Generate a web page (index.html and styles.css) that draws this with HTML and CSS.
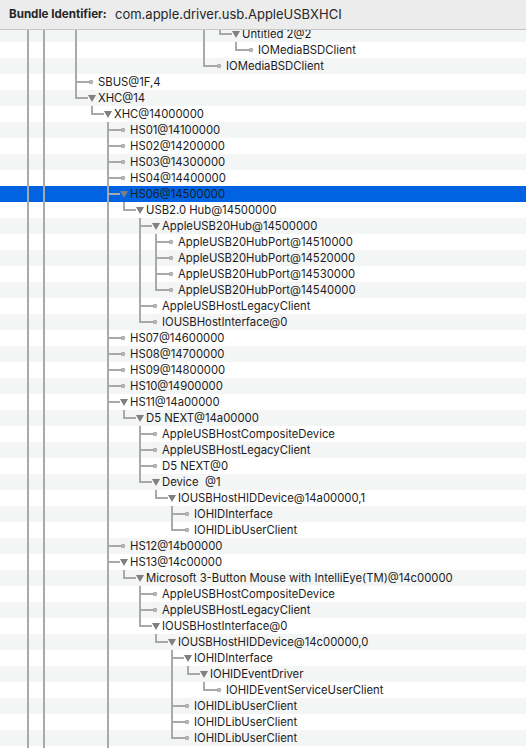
FILE: index.html
```html
<!DOCTYPE html>
<html>
<head>
<meta charset="utf-8">
<link rel="stylesheet" href="styles.css">
</head>
<body>
<div class="hdr"><b>Bundle Identifier:</b><span>com.apple.driver.usb.AppleUSBXHCI</span></div>
<div class="tree">
<div class="rows">
<div class="row"><span class="g p"></span><span class="g p"></span><span class="g"></span><span class="g p"></span><span class="g"></span><span class="g"></span><span class="g"></span><span class="g"></span><span class="g"></span><span class="g"></span><span class="g"></span><span class="g p"></span><span class="g e"></span><span class="m o"><i></i></span><span class="tx">Untitled 2@2</span></div>
<div class="row"><span class="g p"></span><span class="g p"></span><span class="g"></span><span class="g p"></span><span class="g"></span><span class="g"></span><span class="g"></span><span class="g"></span><span class="g"></span><span class="g"></span><span class="g"></span><span class="g p"></span><span class="g"></span><span class="g e"></span><span class="m l"></span><span class="tx">IOMediaBSDClient</span></div>
<div class="row"><span class="g p"></span><span class="g p"></span><span class="g"></span><span class="g p"></span><span class="g"></span><span class="g"></span><span class="g"></span><span class="g"></span><span class="g"></span><span class="g"></span><span class="g"></span><span class="g e"></span><span class="m l"></span><span class="tx">IOMediaBSDClient</span></div>
<div class="row"><span class="g p"></span><span class="g p"></span><span class="g"></span><span class="g t"></span><span class="m l"></span><span class="tx">SBUS@1F,4</span></div>
<div class="row"><span class="g p"></span><span class="g p"></span><span class="g"></span><span class="g e"></span><span class="m o"><i></i></span><span class="tx">XHC@14</span></div>
<div class="row"><span class="g p"></span><span class="g p"></span><span class="g"></span><span class="g"></span><span class="g e"></span><span class="m o"><i></i></span><span class="tx">XHC@14000000</span></div>
<div class="row"><span class="g p"></span><span class="g p"></span><span class="g"></span><span class="g"></span><span class="g"></span><span class="g t"></span><span class="m l"></span><span class="tx">HS01@14100000</span></div>
<div class="row"><span class="g p"></span><span class="g p"></span><span class="g"></span><span class="g"></span><span class="g"></span><span class="g t"></span><span class="m l"></span><span class="tx">HS02@14200000</span></div>
<div class="row"><span class="g p"></span><span class="g p"></span><span class="g"></span><span class="g"></span><span class="g"></span><span class="g t"></span><span class="m l"></span><span class="tx">HS03@14300000</span></div>
<div class="row"><span class="g p"></span><span class="g p"></span><span class="g"></span><span class="g"></span><span class="g"></span><span class="g t"></span><span class="m l"></span><span class="tx">HS04@14400000</span></div>
<div class="row sel"><span class="g p"></span><span class="g p"></span><span class="g"></span><span class="g"></span><span class="g"></span><span class="g t"></span><span class="m o"><i></i></span><span class="tx">HS06@14500000</span></div>
<div class="row"><span class="g p"></span><span class="g p"></span><span class="g"></span><span class="g"></span><span class="g"></span><span class="g p"></span><span class="g e"></span><span class="m o"><i></i></span><span class="tx">USB2.0 Hub@14500000</span></div>
<div class="row"><span class="g p"></span><span class="g p"></span><span class="g"></span><span class="g"></span><span class="g"></span><span class="g p"></span><span class="g"></span><span class="g t"></span><span class="m o"><i></i></span><span class="tx">AppleUSB20Hub@14500000</span></div>
<div class="row"><span class="g p"></span><span class="g p"></span><span class="g"></span><span class="g"></span><span class="g"></span><span class="g p"></span><span class="g"></span><span class="g p"></span><span class="g t"></span><span class="m l"></span><span class="tx">AppleUSB20HubPort@14510000</span></div>
<div class="row"><span class="g p"></span><span class="g p"></span><span class="g"></span><span class="g"></span><span class="g"></span><span class="g p"></span><span class="g"></span><span class="g p"></span><span class="g t"></span><span class="m l"></span><span class="tx">AppleUSB20HubPort@14520000</span></div>
<div class="row"><span class="g p"></span><span class="g p"></span><span class="g"></span><span class="g"></span><span class="g"></span><span class="g p"></span><span class="g"></span><span class="g p"></span><span class="g t"></span><span class="m l"></span><span class="tx">AppleUSB20HubPort@14530000</span></div>
<div class="row"><span class="g p"></span><span class="g p"></span><span class="g"></span><span class="g"></span><span class="g"></span><span class="g p"></span><span class="g"></span><span class="g p"></span><span class="g e"></span><span class="m l"></span><span class="tx">AppleUSB20HubPort@14540000</span></div>
<div class="row"><span class="g p"></span><span class="g p"></span><span class="g"></span><span class="g"></span><span class="g"></span><span class="g p"></span><span class="g"></span><span class="g t"></span><span class="m l"></span><span class="tx">AppleUSBHostLegacyClient</span></div>
<div class="row"><span class="g p"></span><span class="g p"></span><span class="g"></span><span class="g"></span><span class="g"></span><span class="g p"></span><span class="g"></span><span class="g e"></span><span class="m l"></span><span class="tx">IOUSBHostInterface@0</span></div>
<div class="row"><span class="g p"></span><span class="g p"></span><span class="g"></span><span class="g"></span><span class="g"></span><span class="g t"></span><span class="m l"></span><span class="tx">HS07@14600000</span></div>
<div class="row"><span class="g p"></span><span class="g p"></span><span class="g"></span><span class="g"></span><span class="g"></span><span class="g t"></span><span class="m l"></span><span class="tx">HS08@14700000</span></div>
<div class="row"><span class="g p"></span><span class="g p"></span><span class="g"></span><span class="g"></span><span class="g"></span><span class="g t"></span><span class="m l"></span><span class="tx">HS09@14800000</span></div>
<div class="row"><span class="g p"></span><span class="g p"></span><span class="g"></span><span class="g"></span><span class="g"></span><span class="g t"></span><span class="m l"></span><span class="tx">HS10@14900000</span></div>
<div class="row"><span class="g p"></span><span class="g p"></span><span class="g"></span><span class="g"></span><span class="g"></span><span class="g t"></span><span class="m o"><i></i></span><span class="tx">HS11@14a00000</span></div>
<div class="row"><span class="g p"></span><span class="g p"></span><span class="g"></span><span class="g"></span><span class="g"></span><span class="g p"></span><span class="g e"></span><span class="m o"><i></i></span><span class="tx">D5 NEXT@14a00000</span></div>
<div class="row"><span class="g p"></span><span class="g p"></span><span class="g"></span><span class="g"></span><span class="g"></span><span class="g p"></span><span class="g"></span><span class="g t"></span><span class="m l"></span><span class="tx">AppleUSBHostCompositeDevice</span></div>
<div class="row"><span class="g p"></span><span class="g p"></span><span class="g"></span><span class="g"></span><span class="g"></span><span class="g p"></span><span class="g"></span><span class="g t"></span><span class="m l"></span><span class="tx">AppleUSBHostLegacyClient</span></div>
<div class="row"><span class="g p"></span><span class="g p"></span><span class="g"></span><span class="g"></span><span class="g"></span><span class="g p"></span><span class="g"></span><span class="g t"></span><span class="m l"></span><span class="tx">D5 NEXT@0</span></div>
<div class="row"><span class="g p"></span><span class="g p"></span><span class="g"></span><span class="g"></span><span class="g"></span><span class="g p"></span><span class="g"></span><span class="g e"></span><span class="m o"><i></i></span><span class="tx">Device  @1</span></div>
<div class="row"><span class="g p"></span><span class="g p"></span><span class="g"></span><span class="g"></span><span class="g"></span><span class="g p"></span><span class="g"></span><span class="g"></span><span class="g e"></span><span class="m o"><i></i></span><span class="tx">IOUSBHostHIDDevice@14a00000,1</span></div>
<div class="row"><span class="g p"></span><span class="g p"></span><span class="g"></span><span class="g"></span><span class="g"></span><span class="g p"></span><span class="g"></span><span class="g"></span><span class="g"></span><span class="g t"></span><span class="m l"></span><span class="tx">IOHIDInterface</span></div>
<div class="row"><span class="g p"></span><span class="g p"></span><span class="g"></span><span class="g"></span><span class="g"></span><span class="g p"></span><span class="g"></span><span class="g"></span><span class="g"></span><span class="g e"></span><span class="m l"></span><span class="tx">IOHIDLibUserClient</span></div>
<div class="row"><span class="g p"></span><span class="g p"></span><span class="g"></span><span class="g"></span><span class="g"></span><span class="g t"></span><span class="m l"></span><span class="tx">HS12@14b00000</span></div>
<div class="row"><span class="g p"></span><span class="g p"></span><span class="g"></span><span class="g"></span><span class="g"></span><span class="g t"></span><span class="m o"><i></i></span><span class="tx">HS13@14c00000</span></div>
<div class="row"><span class="g p"></span><span class="g p"></span><span class="g"></span><span class="g"></span><span class="g"></span><span class="g p"></span><span class="g e"></span><span class="m o"><i></i></span><span class="tx">Microsoft 3-Button Mouse with IntelliEye(TM)@14c00000</span></div>
<div class="row"><span class="g p"></span><span class="g p"></span><span class="g"></span><span class="g"></span><span class="g"></span><span class="g p"></span><span class="g"></span><span class="g t"></span><span class="m l"></span><span class="tx">AppleUSBHostCompositeDevice</span></div>
<div class="row"><span class="g p"></span><span class="g p"></span><span class="g"></span><span class="g"></span><span class="g"></span><span class="g p"></span><span class="g"></span><span class="g t"></span><span class="m l"></span><span class="tx">AppleUSBHostLegacyClient</span></div>
<div class="row"><span class="g p"></span><span class="g p"></span><span class="g"></span><span class="g"></span><span class="g"></span><span class="g p"></span><span class="g"></span><span class="g e"></span><span class="m o"><i></i></span><span class="tx">IOUSBHostInterface@0</span></div>
<div class="row"><span class="g p"></span><span class="g p"></span><span class="g"></span><span class="g"></span><span class="g"></span><span class="g p"></span><span class="g"></span><span class="g"></span><span class="g e"></span><span class="m o"><i></i></span><span class="tx">IOUSBHostHIDDevice@14c00000,0</span></div>
<div class="row"><span class="g p"></span><span class="g p"></span><span class="g"></span><span class="g"></span><span class="g"></span><span class="g p"></span><span class="g"></span><span class="g"></span><span class="g"></span><span class="g t"></span><span class="m o"><i></i></span><span class="tx">IOHIDInterface</span></div>
<div class="row"><span class="g p"></span><span class="g p"></span><span class="g"></span><span class="g"></span><span class="g"></span><span class="g p"></span><span class="g"></span><span class="g"></span><span class="g"></span><span class="g p"></span><span class="g e"></span><span class="m o"><i></i></span><span class="tx">IOHIDEventDriver</span></div>
<div class="row"><span class="g p"></span><span class="g p"></span><span class="g"></span><span class="g"></span><span class="g"></span><span class="g p"></span><span class="g"></span><span class="g"></span><span class="g"></span><span class="g p"></span><span class="g"></span><span class="g e"></span><span class="m l"></span><span class="tx">IOHIDEventServiceUserClient</span></div>
<div class="row"><span class="g p"></span><span class="g p"></span><span class="g"></span><span class="g"></span><span class="g"></span><span class="g p"></span><span class="g"></span><span class="g"></span><span class="g"></span><span class="g t"></span><span class="m l"></span><span class="tx">IOHIDLibUserClient</span></div>
<div class="row"><span class="g p"></span><span class="g p"></span><span class="g"></span><span class="g"></span><span class="g"></span><span class="g p"></span><span class="g"></span><span class="g"></span><span class="g"></span><span class="g t"></span><span class="m l"></span><span class="tx">IOHIDLibUserClient</span></div>
<div class="row"><span class="g p"></span><span class="g p"></span><span class="g"></span><span class="g"></span><span class="g"></span><span class="g p"></span><span class="g"></span><span class="g"></span><span class="g"></span><span class="g e"></span><span class="m l"></span><span class="tx">IOHIDLibUserClient</span></div>
<div class="row"><span class="g p"></span><span class="g p"></span><span class="g"></span><span class="g"></span><span class="g"></span><span class="g p"></span></div>
</div>
</div>
</body>
</html>
```

FILE: styles.css
```css
html, body {
  margin: 0;
  padding: 0;
}
body {
  width: 526px;
  height: 748px;
  overflow: hidden;
  background: #ffffff;
  font-family: Inter, "Noto Sans", sans-serif;
  color: #1c1c1c;
}
.hdr {
  box-sizing: border-box;
  height: 30px;
  border-bottom: 1px solid #c6c6c6;
  background: #ececec;
  display: grid;
  grid-template-columns: 106px auto;
  align-items: center;
  padding: 0 0 1px 9px;
  font-size: 13px;
  color: #262626;
  white-space: nowrap;
}
.hdr b {
  font-size: 11.6px;
  font-weight: 700;
}
.tree {
  height: 718px;
  overflow: hidden;
}
.rows {
  margin-top: -4px;
}
.row {
  display: flex;
  height: 16px;
  padding-left: 20px;
  font-size: 11.3px;
  line-height: 16px;
  white-space: pre;
}
.row:nth-child(odd) {
  background: #f4f5f5;
}
.row.sel {
  background: #0063e1;
}
.g {
  width: 16px;
  height: 16px;
  flex: none;
}
.p {
  background: linear-gradient(#a9a9a9, #a9a9a9) 7px 0 / 2px 16px no-repeat;
}
.t {
  background:
    linear-gradient(#a9a9a9, #a9a9a9) 7px 0 / 2px 16px no-repeat,
    linear-gradient(#a9a9a9, #a9a9a9) 8px 7px / 8px 2px no-repeat;
}
.e {
  background:
    linear-gradient(#a9a9a9, #a9a9a9) 7px 0 / 2px 9px no-repeat,
    linear-gradient(#a9a9a9, #a9a9a9) 8px 7px / 8px 2px no-repeat;
}
.m {
  width: 14px;
  height: 16px;
  flex: none;
}
.l {
  background:
    linear-gradient(#a9a9a9, #a9a9a9) 0 7px / 6px 2px no-repeat,
    radial-gradient(circle at 7px 8px, #b3b3b3 0 2px, rgba(179,179,179,0) 2.6px);
}
.o {
  background: linear-gradient(#a9a9a9, #a9a9a9) 0 7px / 4px 2px no-repeat;
}
.o i {
  display: block;
  width: 0;
  height: 0;
  margin: 5px 0 0 4px;
  border-left: 4px solid transparent;
  border-right: 4px solid transparent;
  border-top: 7px solid #7f7f7f;
}
.tx {
  flex: none;
}
```
